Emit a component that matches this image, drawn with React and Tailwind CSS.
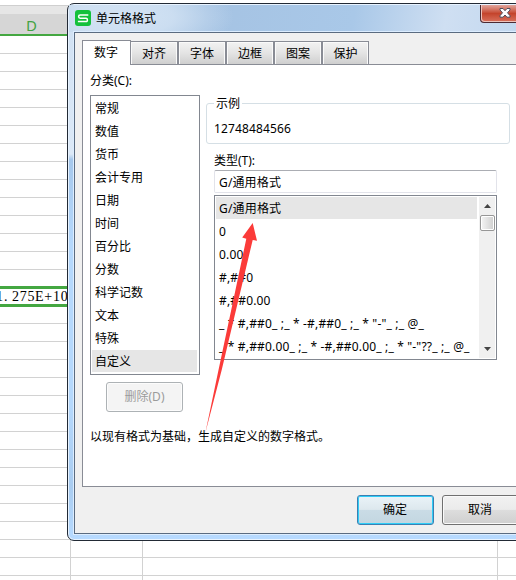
import React from "react";

const UI_FONT = "font-['Noto_Sans','Noto_Sans_CJK_SC',sans-serif]";

const categories = ["常规", "数值", "货币", "会计专用", "日期", "时间", "百分比", "分数", "科学记数", "文本", "特殊", "自定义"];

const formats = [
  "G/通用格式",
  "0",
  "0.00",
  "#,##0",
  "#,##0.00",
  '_ * #,##0_ ;_ * -#,##0_ ;_ * "-"_ ;_ @_ ',
  '_ * #,##0.00_ ;_ * -#,##0.00_ ;_ * "-"??_ ;_ @_ ',
];

const tabs = ["对齐", "字体", "边框", "图案", "保护"];

function Sheet() {
  return (
    <div className="flex h-[580px] flex-col overflow-hidden bg-white">
      <div className="h-[5px] shrink-0 bg-white" />
      <div className="h-px shrink-0 bg-[#cfcfcf]" />
      <div className="h-2 shrink-0 bg-[#e6e6e6]" />
      <div className="flex h-5 shrink-0 bg-[#d6d6d6] font-['Noto_Sans',sans-serif] text-[15px] leading-[22px] text-[#44a344]">
        <span className="w-[63px] text-center">D</span>
      </div>
      <div className="h-0.5 shrink-0 bg-[#44a741]" />
      {Array.from({ length: 31 }, (_, i) => (
        <div key={i} className="flex h-[18px] shrink-0 border-b border-[#d2d2d2]">
          <div className="w-[71px] shrink-0 border-r border-[#d2d2d2]" />
          <div className="w-[72px] shrink-0 border-r border-[#d2d2d2]" />
          <div className="w-[355px] shrink-0 border-r border-[#d2d2d2]" />
        </div>
      ))}
    </div>
  );
}

function ActiveCell() {
  return (
    <div className="absolute top-[286px] left-[-6px] flex h-[21px] w-[80px] items-center border-y-[3px] border-[#44a741] bg-white pt-px pl-[2px] font-['Liberation_Serif',serif] text-[14px] leading-none whitespace-nowrap text-black">
      <span className="w-2">1</span>
      <span className="w-2">.</span>
      <span className="tracking-[0.7px]">275E+10</span>
    </div>
  );
}

function TitleBar() {
  return (
    <div className="flex h-[27px] shrink-0 bg-[radial-gradient(ellipse_110px_40px_at_55px_12px,#d3e3f4_0%,#d3e3f4cc_45%,#d3e3f400_100%),linear-gradient(100deg,#bdd3ea_0%,#a5c3e3_30%,#a9c8e8_62%,#cfdff2_82%,#c1d7ef_100%)]">
      <svg className="mt-[5px] ml-[6px] shrink-0" width="16" height="16" viewBox="0 0 16 16">
        <rect width="16" height="16" rx="3" fill="#14c13c" />
        <path d="M13.3 5H5.2Q3.6 5 3.6 6.6T5.2 8.2H11Q12.4 8.2 12.4 9.9T11 11.5H2.9" fill="none" stroke="#fff" strokeWidth="1.5" />
      </svg>
      <span className="ml-[5px] pt-[5px] text-[12px] leading-[18px]">单元格格式</span>
      <div className="ml-auto flex h-[18px] w-[47px] justify-start rounded-bl-[4px] border border-t-0 border-[#4b2a33] bg-linear-to-b from-[#e0a49c] from-0% via-[#c4442c] via-50% to-[#d8705c] shadow-[inset_1px_-1px_0_#eec3bb]">
        <svg className="mt-[3px] ml-[18px]" width="12" height="10" viewBox="0 0 12 10">
          <path d="M1 .5H4L6 2.7L8 .5H11V2L8.5 4.8L11 7.7V9.2H8L6 7L4 9.2H1V7.7L3.5 4.8L1 2Z" fill="#fff" stroke="#4d4f5e" strokeWidth="1" />
        </svg>
      </div>
    </div>
  );
}

function TabStrip() {
  return (
    <div className="relative -mb-px flex h-[25px] items-end">
      <div className="relative h-[25px] w-[49px] border border-b-0 border-[#898c95] bg-white pt-[3px] pl-[11px] leading-[18px]">数字</div>
      {tabs.map((t, i) => (
        <div
          key={t}
          className={
            "h-6 border border-[#898c95] bg-linear-to-b from-[#f2f2f2] from-0% via-[#e4e4e4] via-50% to-[#cfcfcf] pt-[3px] text-center leading-[18px] shadow-[inset_1px_1px_0_#fafafa,inset_-1px_0_0_#fafafa] " +
            (i === 0 ? "w-[47px] border-l-0" : i === 4 ? "w-[47px]" : "w-12")
          }
        >
          {t}
        </div>
      ))}
    </div>
  );
}

function ScrollBar() {
  return (
    <div className="flex w-4 flex-col items-center bg-[#f0f0f0]">
      <svg className="mt-[7px]" width="7" height="4"><path d="M0 4L3.5 0L7 4Z" fill="#444" /></svg>
      <div className="mt-[7px] h-4 w-[15px] rounded-[2px] border border-[#979797] bg-linear-to-r from-[#f5f5f5] to-[#cfcfcf] shadow-[inset_0_0_0_1px_#fff]" />
      <svg className="mt-auto mb-[7px]" width="7" height="4"><path d="M0 0L3.5 4L7 0Z" fill="#444" /></svg>
    </div>
  );
}

function TypeSection() {
  return (
    <div className="flex w-[304px] flex-col">
      <fieldset className="ml-0 h-[49px] rounded-[3px] border border-[#d5dfe5] pl-[7px]">
        <legend className="ml-0 px-[2px] leading-[17px]">示例</legend>
        <div className="pt-[8px] leading-[17px] tracking-[0.14px]">12748484566</div>
      </fieldset>
      <div className="mt-[7px] ml-2 h-[19px] leading-[19px]">类型(T):</div>
      <div className="ml-2 h-[23px] w-[283px] rounded-[2px] border border-[#e2e3ea] border-t-[#abadb3] pl-[4px] leading-[23px] tracking-[0.14px]">G/通用格式</div>
      <div className="mt-[2px] ml-2 flex h-[165px] w-[283px] border border-[#828790] p-px">
        <div className="w-[261px]">
          {formats.map((f, i) => (
            <div
              key={f}
              className={"h-[23px] pl-[3px] leading-[24px] tracking-[0.17px] whitespace-pre " + (i === 0 ? "border-b border-white bg-[#e6e6e6] bg-clip-padding" : "")}
            >
              {f}
            </div>
          ))}
        </div>
        <div className="ml-[2px] flex">
          <ScrollBar />
        </div>
      </div>
    </div>
  );
}

function NumberPage() {
  return (
    <div className="flex h-[423px] flex-col border border-r-0 border-[#898c95] bg-white pl-[7px]">
      <div className="flex">
        <div className="w-[110px]">
          <div className="h-[30px] pt-[7px] leading-[18px]">分类(C):</div>
          <div className="h-[280px] border border-[#828790] p-px">
            {categories.map((c, i) => (
              <div key={c} className={"h-[23px] pl-[3px] leading-[24px] " + (i === 11 ? "mr-px border-b border-white bg-[#e6e6e6] bg-clip-padding" : "")}>
                {c}
              </div>
            ))}
          </div>
        </div>
        <div className="ml-[6px] pt-[30px]">
          <TypeSection />
        </div>
      </div>
      <div className="mt-[7px] ml-4 h-[30px] w-[77px] rounded-[3px] border border-[#adb2b5] bg-[#f4f4f4] text-center leading-[28px] text-[#9b9b9b] shadow-[inset_0_0_0_1px_#fcfcfc]">删除(D)</div>
      <div className="mt-[15px] leading-[20px]">以现有格式为基础，生成自定义的数字格式。</div>
    </div>
  );
}

function Dialog() {
  return (
    <div className={"absolute top-[3px] left-[67px] flex h-[538px] w-[462px] flex-col rounded-[7px] border border-[#222a35] bg-[linear-gradient(to_bottom,#cfe0f2_0%,#dce9f7_28%,#a6c8ec_29%,#b5d8fc_45%,#b5d8fc_75%,#a9ccf0_90%,#b7daff_100%)] text-[12px] text-black shadow-[inset_0_0_0_1px_#e8f3ff] " + UI_FONT}>
      <div className="flex flex-col overflow-hidden pt-px pr-[1px] pl-px">
        <TitleBar />
      </div>
      <div className="ml-[6px] flex h-[502px] flex-col border border-[#5a6b80] bg-[#f0f0f0] pt-[7px] pl-[7px] shadow-[0_0_0_1px_#dcedff]">
        <TabStrip />
        <NumberPage />
        <div className="mt-2 flex gap-2 pl-[275px]">
          <div className="h-[30px] w-[77px] shrink-0 rounded-[3px] border border-[#3c7fb1] bg-[linear-gradient(#eaf3f8_0%,#dde8ee_48%,#cadce6_50%,#c3d6e0_100%)] pr-px text-center leading-[28px] shadow-[inset_0_0_0_1px_#2fcdf7]">确定</div>
          <div className="h-[30px] w-[77px] shrink-0 rounded-[3px] border border-[#707070] bg-[linear-gradient(#f2f2f2_0%,#ebebeb_48%,#dddddd_50%,#cfcfcf_100%)] pr-px text-center leading-[28px] shadow-[inset_0_0_0_1px_#fafafa]">取消</div>
        </div>
      </div>
    </div>
  );
}

export default function App() {
  return (
    <div className="relative h-[580px] w-[516px] overflow-hidden bg-white">
      <Sheet />
      <ActiveCell />
      <Dialog />
      <svg className="absolute top-0 left-0" width="516" height="580" viewBox="0 0 516 580">
        <path d="M252.7 223L257 240.8L252.7 240L221.7 370L205.3 433L218.5 370L246.3 238.8L242.2 237.5Z" fill="#fb3b39" />
      </svg>
    </div>
  );
}
